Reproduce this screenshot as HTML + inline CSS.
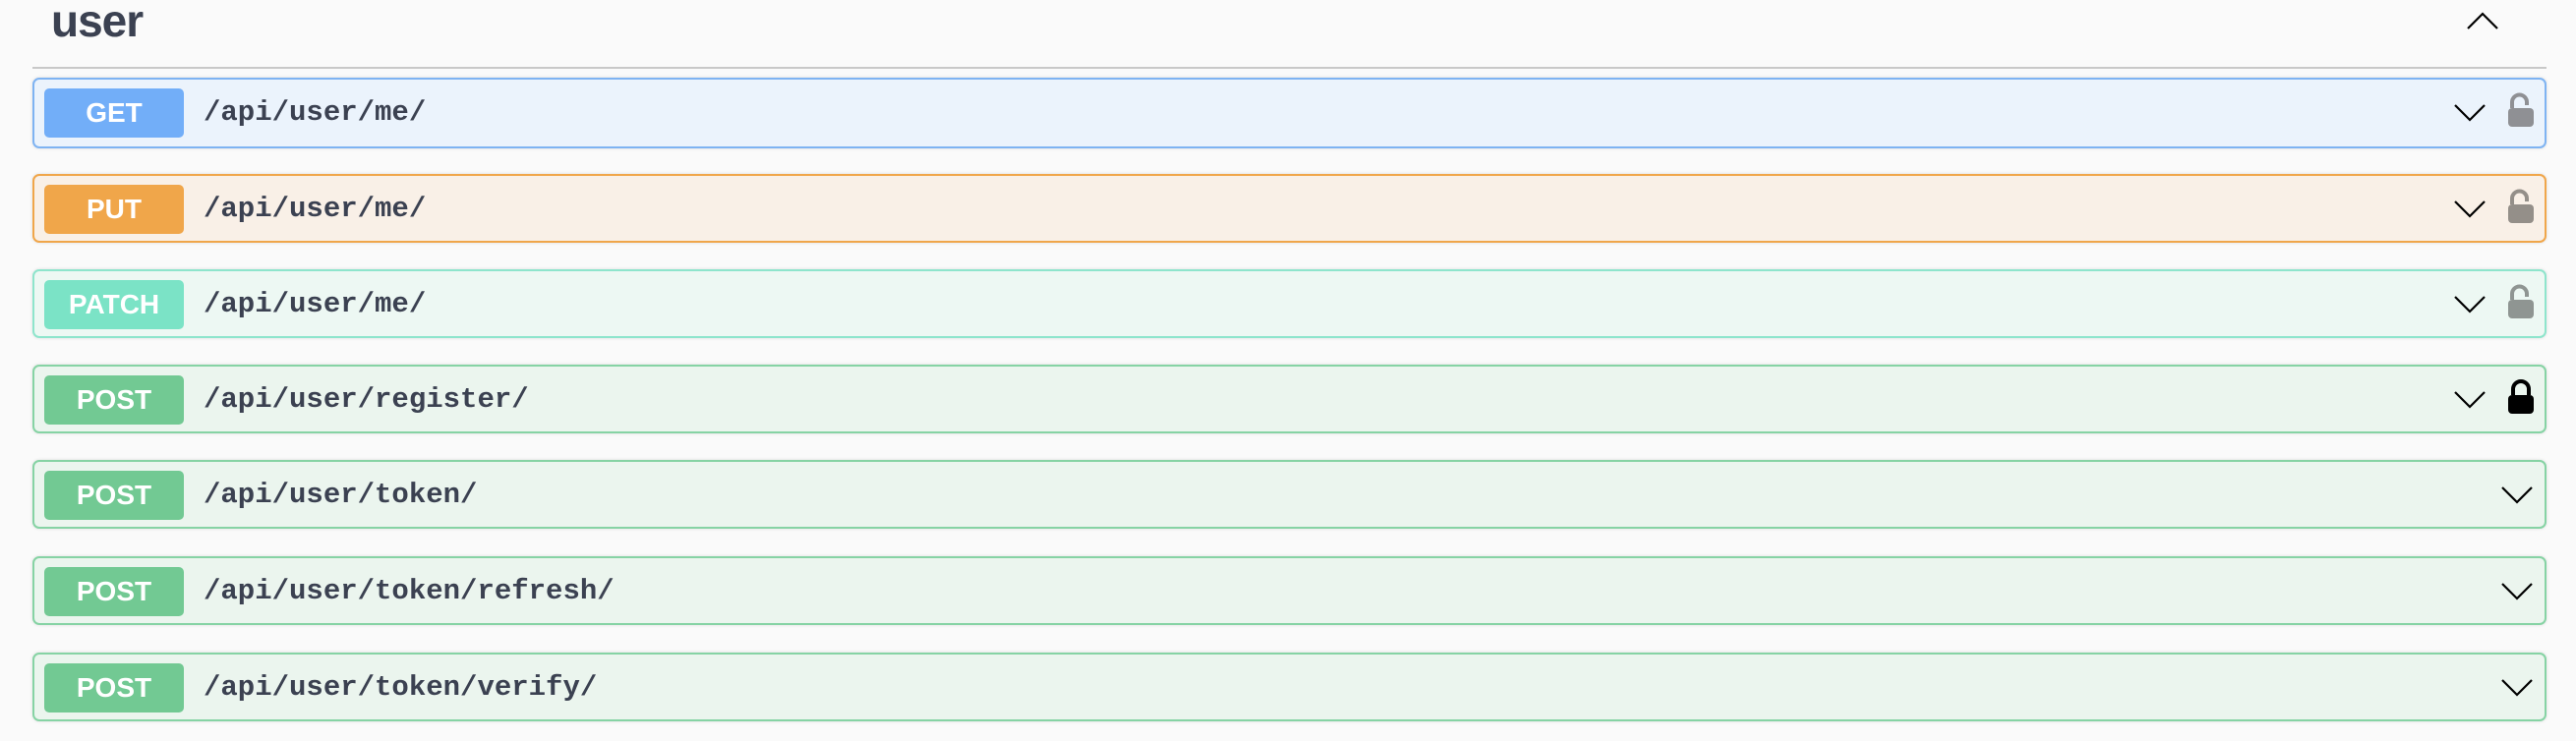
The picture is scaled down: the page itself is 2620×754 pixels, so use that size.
<!DOCTYPE html>
<html><head><meta charset="utf-8"><style>
*{box-sizing:border-box;margin:0;padding:0}
body{width:2620px;height:754px;background:#fafafa;font-family:"Liberation Sans",sans-serif;position:relative;overflow:hidden}
.h{position:absolute;left:52px;top:-6px;font-size:46px;font-weight:bold;color:#3b4151;letter-spacing:-1px}
.line{position:absolute;left:33px;top:68px;width:2557px;height:2px;background:#c8c8c8}
.up{position:absolute;left:2508px;top:12px}
.row{position:absolute;left:33px;width:2557px;height:72px;border:2px solid;border-radius:7px;box-shadow:0 0 3px rgba(0,0,0,.12)}
.b{position:absolute;left:10px;top:9px;width:142px;height:50px;border-radius:5px;color:#fff;font-weight:bold;font-size:28px;text-align:center;line-height:50px}
.p{position:absolute;left:172px;top:0;line-height:68px;font-family:"Liberation Mono",monospace;font-weight:bold;font-size:29px;color:#3b4151}
.c{position:absolute;left:2460px;top:22px}
.l{position:absolute;left:2514px;top:13px}
.get{border-color:#7eb3f2;background:#ebf3fc}.get .b{background:#72aef8}
.put{border-color:#f0a64a;background:#f9f0e7}.put .b{background:#f0a64a}
.patch{border-color:#8ee5cc;background:#edf8f3}.patch .b{background:#7be3c6}
.post{border-color:#86d3a4;background:#ebf5ee}.post .b{background:#72c993}
</style></head><body>
<div class="h">user</div>
<svg class="up" width="34" height="22" viewBox="0 0 34 22"><path d="M2 17 L17 2 L32 17" fill="none" stroke="#000" stroke-width="2.2"/></svg>
<div class="line"></div>

<div class="row get" style="top:79px"><div class="b">GET</div><div class="p">/api/user/me/</div>
<svg class="c" width="34" height="22" viewBox="0 0 34 22"><path d="M2 4 L17 19 L32 4" fill="none" stroke="#000" stroke-width="2.2"/></svg>
<svg class="l" width="30" height="38" viewBox="0 0 30 38"><path d="M6 16 V10 A7.5 7.5 0 0 1 21 10 V13" fill="none" stroke="#8f9094" stroke-width="4"/><rect x="2" y="16" width="26" height="19" rx="4" fill="#8f9094"/></svg></div>

<div class="row put" style="top:177px;height:70px"><div class="b">PUT</div><div class="p">/api/user/me/</div>
<svg class="c" width="34" height="22" viewBox="0 0 34 22"><path d="M2 4 L17 19 L32 4" fill="none" stroke="#000" stroke-width="2.2"/></svg>
<svg class="l" width="30" height="38" viewBox="0 0 30 38"><path d="M6 16 V10 A7.5 7.5 0 0 1 21 10 V13" fill="none" stroke="#948f89" stroke-width="4"/><rect x="2" y="16" width="26" height="19" rx="4" fill="#948f89"/></svg></div>

<div class="row patch" style="top:274px;height:70px"><div class="b">PATCH</div><div class="p">/api/user/me/</div>
<svg class="c" width="34" height="22" viewBox="0 0 34 22"><path d="M2 4 L17 19 L32 4" fill="none" stroke="#000" stroke-width="2.2"/></svg>
<svg class="l" width="30" height="38" viewBox="0 0 30 38"><path d="M6 16 V10 A7.5 7.5 0 0 1 21 10 V13" fill="none" stroke="#8f9592" stroke-width="4"/><rect x="2" y="16" width="26" height="19" rx="4" fill="#8f9592"/></svg></div>

<div class="row post" style="top:371px;height:70px"><div class="b">POST</div><div class="p">/api/user/register/</div>
<svg class="c" width="34" height="22" viewBox="0 0 34 22"><path d="M2 4 L17 19 L32 4" fill="none" stroke="#000" stroke-width="2.2"/></svg>
<svg class="l" width="30" height="38" viewBox="0 0 30 38"><path d="M7 16 V10 A8 8 0 0 1 23 10 V16" fill="none" stroke="#000" stroke-width="4"/><rect x="2" y="16" width="26" height="19" rx="4" fill="#000"/></svg></div>

<div class="row post" style="top:468px;height:70px"><div class="b">POST</div><div class="p">/api/user/token/</div>
<svg class="c" style="left:2508px" width="34" height="22" viewBox="0 0 34 22"><path d="M2 4 L17 19 L32 4" fill="none" stroke="#000" stroke-width="2.2"/></svg></div>

<div class="row post" style="top:566px;height:70px"><div class="b">POST</div><div class="p">/api/user/token/refresh/</div>
<svg class="c" style="left:2508px" width="34" height="22" viewBox="0 0 34 22"><path d="M2 4 L17 19 L32 4" fill="none" stroke="#000" stroke-width="2.2"/></svg></div>

<div class="row post" style="top:664px;height:70px"><div class="b">POST</div><div class="p">/api/user/token/verify/</div>
<svg class="c" style="left:2508px" width="34" height="22" viewBox="0 0 34 22"><path d="M2 4 L17 19 L32 4" fill="none" stroke="#000" stroke-width="2.2"/></svg></div>
</body></html>
